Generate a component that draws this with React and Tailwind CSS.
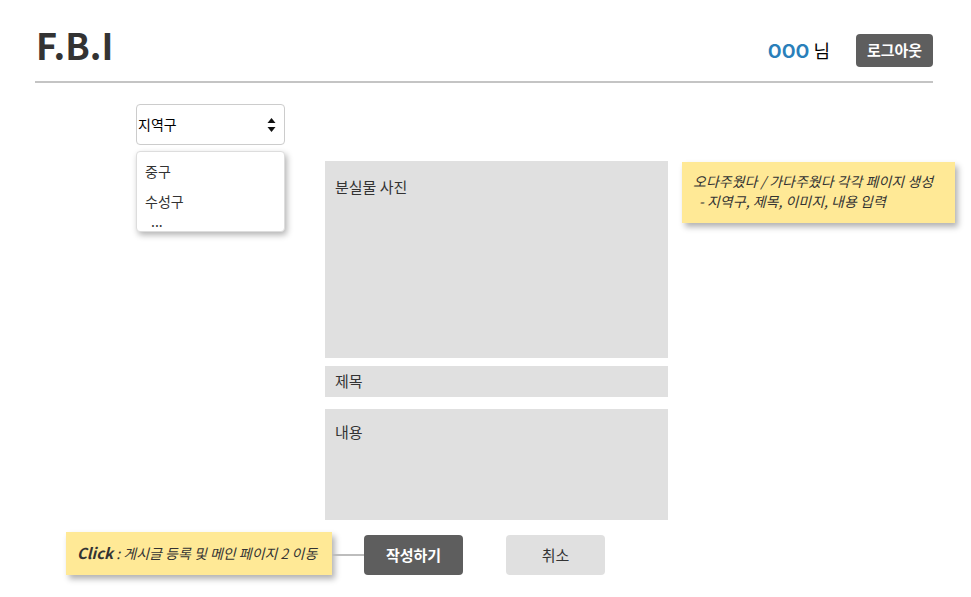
function SelectArrows() {
  return (
    <svg width="9" height="16" viewBox="0 0 9 16" className="mr-[8px]">
      <path d="M4.5 1 L8.5 6 L0.5 6 Z" fill="#111" />
      <path d="M0.5 10 L8.5 10 L4.5 15 Z" fill="#111" />
    </svg>
  );
}

export default function App() {
  return (
    <div
      className="w-[971px] h-[597px] bg-white text-[#333] overflow-hidden"
      style={{ fontFamily: '"Noto Sans CJK KR", "Noto Sans", sans-serif' }}
    >
      {/* header */}
      <div className="ml-[35px] mr-[38px] h-[83px] flex justify-between border-b-2 border-[#c4c4c4]">
        <h1 className="pl-[1px] pt-[20px] text-[36px] leading-[48px] font-bold text-[#333]">
          F.B.I
        </h1>
        <div className="flex items-center gap-[26px] pt-[28px] pb-[9px]">
          <div className="text-[18px] leading-none text-black">
            <span className="font-bold text-[#2a7fba]">OOO</span> 님
          </div>
          <button className="w-[77px] h-[33px] rounded-[4px] bg-[#5e5e5e] text-white text-[15px] font-bold">
            로그아웃
          </button>
        </div>
      </div>

      {/* main */}
      <div className="flex mt-[21px]">
        <div className="w-[325px] pl-[136px] shrink-0">
          <div className="w-[149px] h-[41px] border border-[#cccccc] rounded-[4px] flex items-center justify-between text-[14px] text-black">
            <span className="pl-[1px]">지역구</span>
            <SelectArrows />
          </div>
          <div className="mt-[6px] w-[149px] h-[81px] bg-white rounded-[4px] border border-[#dddddd] shadow-[2px_3px_6px_rgba(0,0,0,0.3)] pl-[8px] pt-[9px] text-[14px] text-[#333]">
            <div className="leading-[20px]">중구</div>
            <div className="leading-[20px] mt-[10px]">수성구</div>
            <div className="leading-[20px] pl-[6px]">...</div>
          </div>
        </div>

        <div className="w-[343px] shrink-0 mt-[57px] flex flex-col text-[15px] text-[#333]">
          <div className="h-[197px] bg-[#e0e0e0] px-[10px] pt-[15px]">분실물 사진</div>
          <div className="h-[31px] mt-[8px] bg-[#e0e0e0] px-[10px] flex items-center">제목</div>
          <div className="h-[111px] mt-[12px] bg-[#e0e0e0] px-[10px] pt-[12px]">내용</div>
        </div>

        <div className="ml-[14px] mt-[58px]">
          <div className="w-[273px] h-[61px] bg-[#ffe996] shadow-[3px_4px_6px_rgba(0,0,0,0.3)] pl-[11px] pt-[9px] text-[14px] italic leading-[20px] text-[#333]">
            <div>오다주웠다 / 가다주웠다 각각 페이지 생성</div>
            <div className="pl-[6px]">- 지역구, 제목, 이미지, 내용 입력</div>
          </div>
        </div>
      </div>

      {/* bottom row */}
      <div className="flex items-center mt-[12px] ml-[66px]">
        <div className="w-[266px] h-[43px] bg-[#ffe996] shadow-[3px_4px_6px_rgba(0,0,0,0.3)] flex items-center pl-[11px] text-[14px] italic text-[#333]">
          <span className="font-bold text-[15px]">Click</span>
          <span>&nbsp;: 게시글 등록 및 메인 페이지 2 이동</span>
        </div>
        <div className="w-[32px] h-[2px] bg-[#bdbdbd] mt-[2px]" />
        <button className="w-[99px] h-[40px] mt-[3px] rounded-[4px] bg-[#5e5e5e] text-white text-[15px] font-bold">
          작성하기
        </button>
        <button className="ml-[43px] w-[99px] h-[40px] mt-[3px] rounded-[4px] bg-[#e0e0e0] text-[#333] text-[15px]">
          취소
        </button>
      </div>
    </div>
  );
}
